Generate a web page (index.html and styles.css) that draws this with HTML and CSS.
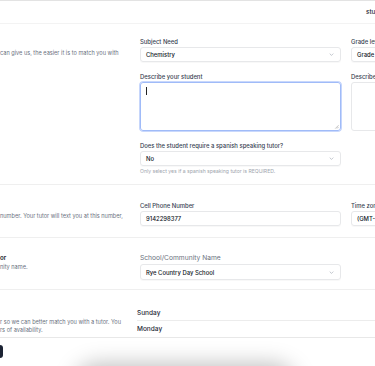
FILE: index.html
```html
<!DOCTYPE html>
<html lang="en">
	<head>
		<meta charset="utf-8" name="viewport" content="width=device-width,initial-scale=1.0" />
		<title>Tutor request</title>
		<link rel="stylesheet" href="styles.css">
	</head>
	<body>
		<header class="topbar">
			<span></span>
			<span class="user">student@ryecountryday.org</span>
		</header>

		<main class="form">
			<!-- student info -->
			<section class="section section-first">
				<div class="intro">
					<p class="intro-text">can give us, the easier it is to match you with</p>
				</div>
				<div class="fields">
					<div class="field">
						<label>Subject Need</label>
						<div class="select">
							<span>Chemistry</span>
							<svg class="chevron" viewBox="0 0 8 5"><path d="M1 1l3 3 3-3" /></svg>
						</div>
					</div>
					<div class="field">
						<label>Grade level</label>
						<div class="select">
							<span>Grade 11</span>
							<svg class="chevron" viewBox="0 0 8 5"><path d="M1 1l3 3 3-3" /></svg>
						</div>
					</div>
					<div class="field">
						<label>Describe your student</label>
						<div class="textarea is-focused">
							<span class="caret"></span>
							<svg class="grip" viewBox="0 0 6 6"><path d="M5.5 1.5l-4 4M5.5 3.5l-2 2" /></svg>
						</div>
					</div>
					<div class="field">
						<label>Describe your ideal tutor</label>
						<div class="textarea"></div>
					</div>
					<div class="field">
						<label>Does the student require a spanish speaking tutor?</label>
						<div class="select">
							<span>No</span>
							<svg class="chevron" viewBox="0 0 8 5"><path d="M1 1l3 3 3-3" /></svg>
						</div>
						<p class="help">Only select yes if a spanish speaking tutor is REQUIRED.</p>
					</div>
				</div>
			</section>

			<!-- contact -->
			<section class="section section-phone">
				<div class="intro">
					<p class="intro-text intro-text-phone">number. Your tutor will text you at this number,</p>
				</div>
				<div class="fields">
					<div class="field">
						<label>Cell Phone Number</label>
						<div class="select"><span>9142298377</span></div>
					</div>
					<div class="field">
						<label>Time zone</label>
						<div class="select"><span>(GMT-05:00) Eastern Time</span></div>
					</div>
				</div>
			</section>

			<!-- school -->
			<section class="section">
				<div class="intro">
					<h4 class="intro-title">or</h4>
					<p class="intro-text intro-text-school">nity name.</p>
				</div>
				<div class="fields">
					<div class="field">
						<label class="label-lg">School/Community Name</label>
						<div class="select select-lg">
							<span>Rye Country Day School</span>
							<svg class="chevron" viewBox="0 0 8 5"><path d="M1 1l3 3 3-3" /></svg>
						</div>
					</div>
				</div>
			</section>

			<!-- availability -->
			<section class="section section-days">
				<div class="intro">
					<p class="intro-text intro-text-days">r so we can better match you with a tutor. You<br>rs of availability.</p>
				</div>
				<ul class="days">
					<li>Sunday</li>
					<li>Monday</li>
				</ul>
			</section>

			<div class="actions">
				<span class="btn-back"></span>
			</div>
		</main>

		<div class="toast"></div>
	</body>
</html>
```

FILE: styles.css
```css
* {
	padding: 0;
	margin: 0;
	box-sizing: border-box;
}

body {
	font-family: Inter, "Liberation Sans", sans-serif;
	background: #fff;
	color: #111827;
	overflow: hidden;
	height: 366px;
}

.topbar {
	display: grid;
	grid-template-columns: 366px auto;
	align-items: center;
	width: 600px;
	height: 24px;
	border-top: 1px solid #e3e3e3;
	border-bottom: 1px solid #f3f3f3;
}

.user {
	font-size: 6.4px;
	font-weight: 500;
	white-space: nowrap;
	color: #1f2937;
}

.section {
	display: grid;
	grid-template-columns: 126px 1fr;
	column-gap: 14px;
	width: 600px;
	padding: 16px 0 9px;
	border-bottom: 1px solid #efefef;
}

.section-first {
	padding-top: 13px;
}

.section-phone {
	padding-bottom: 11px;
}

.section-days {
	padding: 15px 0 0;
	border-bottom-color: #e8e8e8;
}

.intro {
	white-space: nowrap;
	overflow: hidden;
}

.intro-title {
	font-size: 6.2px;
	line-height: 8px;
	font-weight: 600;
	color: #111827;
}

.intro-text {
	font-size: 5.6px;
	line-height: 8px;
	color: #6b7280;
	margin-top: 12px;
}

.intro-text-phone {
	margin-top: 11px;
}

.intro-text-school {
	margin-top: 1px;
}

.intro-text-days {
	line-height: 8.5px;
	margin-top: 12.5px;
}

.fields {
	display: grid;
	grid-template-columns: 201px 201px;
	column-gap: 10px;
	row-gap: 10px;
	align-content: start;
}

label {
	display: block;
	font-size: 5.9px;
	line-height: 9px;
	font-weight: 500;
	color: #374151;
	white-space: nowrap;
	margin-bottom: 1px;
}

.label-lg {
	font-size: 6.7px;
	line-height: 8px;
	font-weight: 400;
	color: #6b7280;
	margin-bottom: 2px;
}

.select {
	display: flex;
	align-items: center;
	justify-content: space-between;
	height: 15px;
	padding: 0 6px 0 5px;
	border: 1px solid #e7e8ea;
	border-radius: 3px;
	box-shadow: 0 1px 1px rgba(0, 0, 0, 0.03);
	font-size: 5.9px;
	font-weight: 450;
	color: #111827;
	white-space: nowrap;
	overflow: hidden;
}

.select-lg {
	height: 16px;
}

.chevron {
	width: 5px;
	height: 3px;
	flex-shrink: 0;
}

.chevron path {
	fill: none;
	stroke: #9ca3af;
	stroke-width: 1;
}

.textarea {
	position: relative;
	height: 49px;
	border: 1px solid #e7e8ea;
	border-radius: 3px;
}

.textarea.is-focused {
	border-color: #a0bbf8;
	box-shadow: 0 0 0 0.8px #b8ccfb;
}

.caret {
	display: block;
	width: 1px;
	height: 8px;
	margin: 4px 0 0 5px;
	background: #222;
}

.grip {
	position: absolute;
	right: 1px;
	bottom: 1px;
	width: 5px;
	height: 5px;
}

.grip path {
	fill: none;
	stroke: #9a9a9a;
	stroke-width: 0.7;
}

.help {
	margin-top: 2px;
	font-size: 5.1px;
	line-height: 7px;
	color: #a0a5ad;
	white-space: nowrap;
}

.days {
	list-style: none;
	margin-left: -3px;
}

.days li {
	height: 16px;
	line-height: 16px;
	font-size: 6.5px;
	font-weight: 500;
	color: #1f2937;
}

.days li:first-child {
	border-bottom: 1px solid #ececec;
}

.actions {
	padding-top: 7px;
}

.btn-back {
	display: block;
	width: 3px;
	height: 13px;
	background: #1c2333;
	border-radius: 0 3px 3px 0;
}

.toast {
	position: fixed;
	left: 85px;
	top: 374px;
	width: 200px;
	height: 40px;
	border-radius: 12px;
	background: #fff;
	box-shadow: 0 0 22px 10px rgba(0, 0, 0, 0.26);
}
```
